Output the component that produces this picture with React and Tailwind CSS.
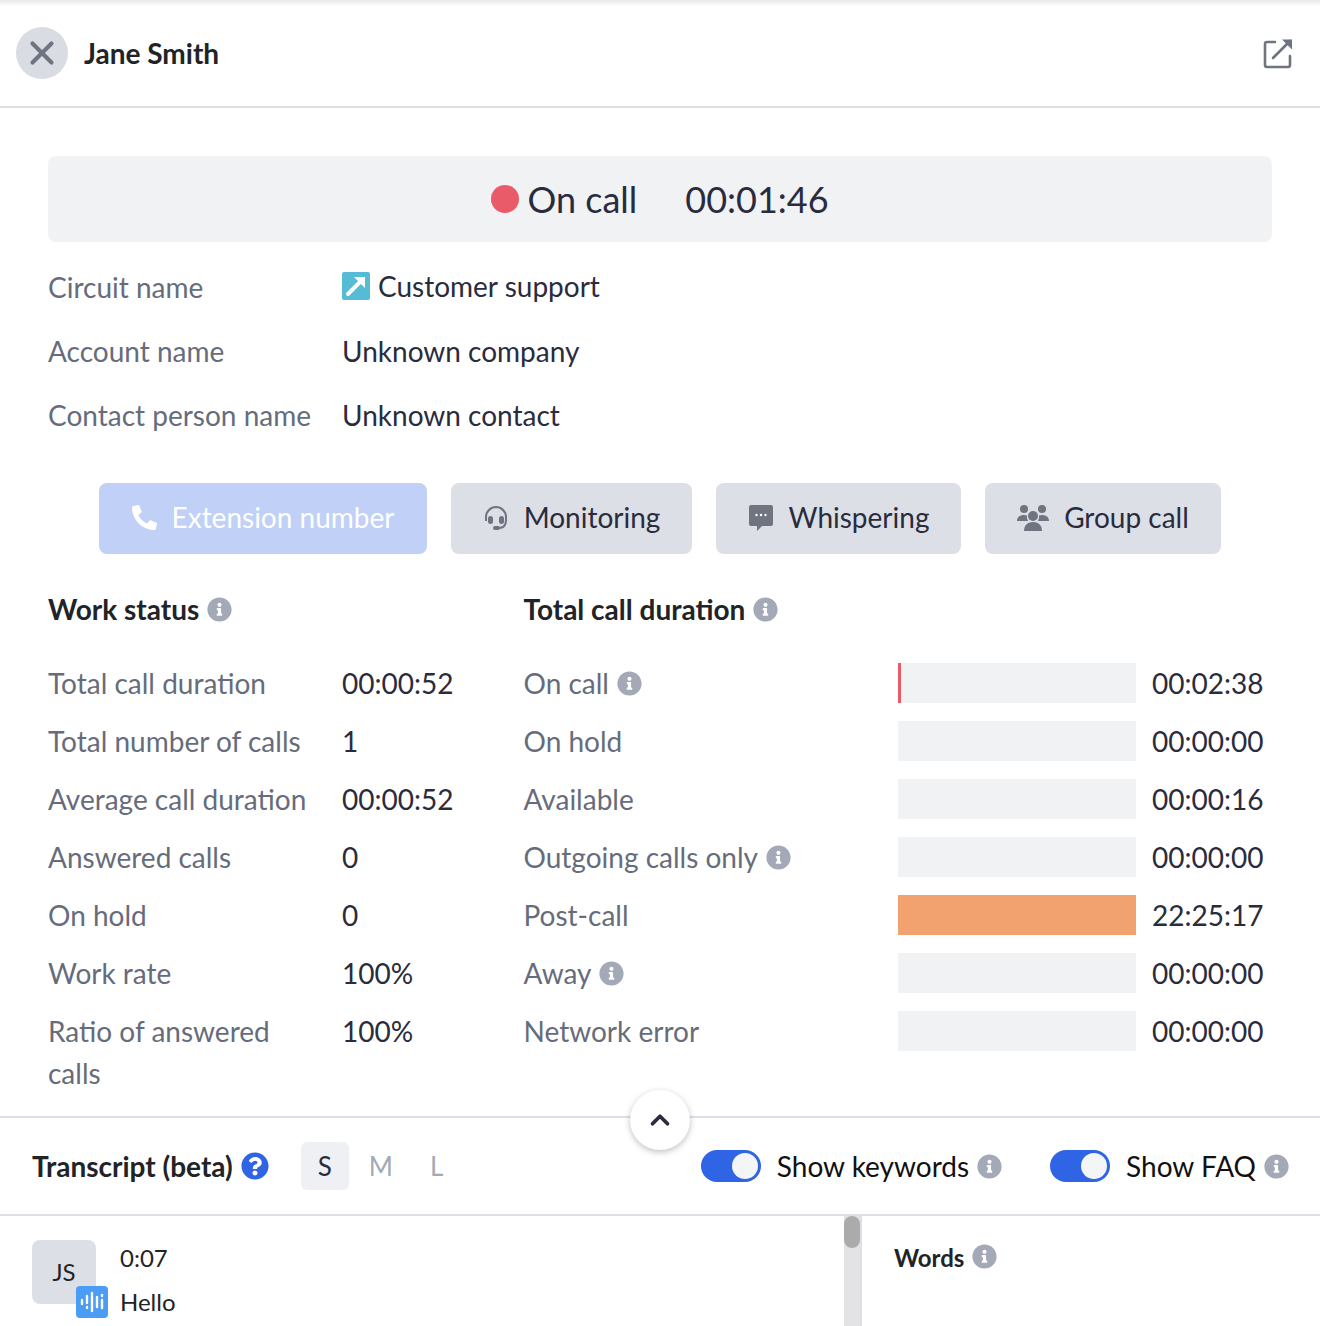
import { X, ChevronUp } from "lucide-react";
import { FaPhoneAlt, FaInfoCircle, FaQuestionCircle } from "react-icons/fa";

const workStatus = [
  ["Total call duration", "00:00:52"],
  ["Total number of calls", "1"],
  ["Average call duration", "00:00:52"],
  ["Answered calls", "0"],
  ["On hold", "0"],
  ["Work rate", "100%"],
  ["Ratio of answered calls", "100%"],
];

const durations = [
  { label: "On call", info: true, value: "00:02:38", bar: "red" },
  { label: "On hold", value: "00:00:00" },
  { label: "Available", value: "00:00:16" },
  { label: "Outgoing calls only", info: true, value: "00:00:00" },
  { label: "Post-call", value: "22:25:17", bar: "orange" },
  { label: "Away", info: true, value: "00:00:00" },
  { label: "Network error", value: "00:00:00" },
];

const Info = ({ className = "" }) => (
  <FaInfoCircle className={"text-[#a3a9b6] text-[25px] shrink-0 " + className} />
);

const Toggle = () => (
  <div className="w-[60px] h-8 rounded-full bg-[#2f64e4] flex items-center justify-end pr-[3px] shrink-0">
    <div className="w-[26px] h-[26px] rounded-full bg-[#f4f5f7]" />
  </div>
);

function ActionButton({ icon, label, className }) {
  return (
    <button className={"h-[71px] pb-0.5 rounded-lg flex items-center justify-center gap-4 bg-[#dcdfe6] text-[#2a2c3d] " + className}>
      {icon}
      <span className="pb-0.5 -ml-px">{label}</span>
    </button>
  );
}

export default function App() {
  return (
    <div className="relative w-[1320px] h-[1326px] overflow-hidden bg-white text-[28px] text-[#2a2c3d] font-['Lato','Liberation_Sans',sans-serif]">
      {/* HEADER */}
      <div className="h-[108px] border-b-2 border-[#dcdfe6] flex items-center pl-4 pr-[26px] bg-gradient-to-b from-[#e8e9ec] to-white to-[6%]">
        <div className="w-[52px] h-[52px] rounded-full bg-[#d9dce3] flex items-center justify-center">
          <X size={38} strokeWidth={2.6} className="text-[#6f7480]" />
        </div>
        <div className="ml-4 text-[28px] font-bold text-[#222326]">Jane Smith</div>
        <svg className="ml-auto" width="32" height="32" viewBox="0 0 32 32" fill="none" stroke="#6f7480" strokeWidth="2.6" strokeLinecap="round">
          <path d="M13 5H5a2 2 0 0 0-2 2v21a2 2 0 0 0 2 2h21a2 2 0 0 0 2-2v-9" />
          <path d="M11 21 28 4" />
          <path d="M20 2.5h10v10z" fill="#6f7480" stroke="none" />
        </svg>
      </div>

      <div className="px-12 pt-12">
        {/* STATUS */}
        <div className="h-[86px] rounded-lg bg-[#f1f2f4] flex items-center justify-center text-[36px]">
          <div className="w-7 h-7 rounded-full bg-[#e95b68] mr-2" />
          <span>On call</span>
          <span className="ml-12">00:01:46</span>
        </div>

        {/* BASIC INFO */}
        <div className="mt-[13px] grid grid-cols-[294px_1fr] auto-rows-[64px] items-center">
          <div className="text-[#666c7b]">Circuit name</div>
          <div className="flex items-center gap-2 -mt-0.5">
            <svg width="28" height="28" viewBox="0 0 28 28">
              <rect width="28" height="28" rx="2" fill="#56bbd5" />
              <path d="M6 22 21 7" stroke="#fff" strokeWidth="4" strokeLinecap="round" />
              <path d="M12 5h11v11z" fill="#fff" />
            </svg>
            Customer support
          </div>
          <div className="text-[#666c7b]">Account name</div>
          <div>Unknown company</div>
          <div className="text-[#666c7b]">Contact person name</div>
          <div>Unknown contact</div>
        </div>

        {/* ACTION BUTTONS */}
        <div className="mt-9 flex justify-center gap-6">
          <ActionButton
            className="w-[328px] !bg-[#c0d0f6] !text-white"
            icon={<FaPhoneAlt className="text-[25px]" />}
            label="Extension number"
          />
          <ActionButton
            className="w-[241px]"
            icon={
              <svg width="26" height="26" viewBox="0 0 26 26" fill="none" stroke="#6f7480" strokeWidth="2">
                <path d="M3 16v-4a10 10 0 0 1 20 0v4" />
                <path d="M23 15c0 5-2 8-7 8" />
                <rect x="5" y="11" width="5" height="8" rx="2.5" fill="#6f7480" stroke="none" />
                <rect x="16" y="11" width="5" height="8" rx="2.5" fill="#6f7480" stroke="none" />
                <rect x="10" y="21" width="7" height="4" rx="2" fill="#6f7480" stroke="none" />
              </svg>
            }
            label="Monitoring"
          />
          <ActionButton
            className="w-[245px]"
            icon={
              <svg width="26" height="30" viewBox="0 0 26 30">
                <path d="M3 2h20a2 2 0 0 1 2 2v17a2 2 0 0 1-2 2H14l-5 5v-5H3a2 2 0 0 1-2-2V4a2 2 0 0 1 2-2z" fill="#6f7480" />
                <circle cx="8.5" cy="12" r="1.2" fill="#fff" />
                <circle cx="13" cy="12" r="1.2" fill="#fff" />
                <circle cx="17.5" cy="12" r="1.2" fill="#fff" />
              </svg>
            }
            label="Whispering"
          />
          <ActionButton
            className="w-[236px]"
            icon={
              <svg width="32" height="28" viewBox="0 0 32 28" fill="#6f7480">
                <circle cx="7" cy="5" r="4" />
                <circle cx="25" cy="5" r="4" />
                <circle cx="16" cy="12" r="5" />
                <path d="M0 17c0-4 3-6 7-6 1 0 2 .2 3 .6A7 7 0 0 0 11 17z" />
                <path d="M32 17c0-4-3-6-7-6-1 0-2 .2-3 .6A7 7 0 0 1 21 17z" />
                <path d="M7 27c0-6 4-9 9-9s9 3 9 9z" />
              </svg>
            }
            label="Group call"
          />
        </div>

        {/* STATS */}
        <div className="mt-[37px] flex">
          <div className="w-[475.5px] shrink-0">
            <div className="h-9 flex items-center gap-2 font-bold text-[#222326]">
              Work status <Info />
            </div>
            <div className="mt-[35px] grid grid-cols-[294px_1fr]">
              {workStatus.map(([label, value]) => (
                <div key={label} className="contents">
                  <div className="text-[#666c7b] leading-[42px] pb-4 pr-6">{label}</div>
                  <div className="leading-[42px]">{value}</div>
                </div>
              ))}
            </div>
          </div>

          <div className="flex-1">
            <div className="h-9 flex items-center gap-2 font-bold text-[#222326]">
              Total call duration <Info />
            </div>
            <div className="mt-[35px]">
              {durations.map((d) => (
                <div key={d.label} className="h-[58px] flex items-start">
                  <div className="w-[374.5px] shrink-0 h-[42px] flex items-center gap-2 text-[#666c7b]">
                    {d.label}
                    {d.info && <Info />}
                  </div>
                  <div
                    className={
                      "w-[238px] h-10 mt-px " +
                      (d.bar === "orange" ? "bg-[#f2a26f]" : "bg-[#f1f2f4]") +
                      (d.bar === "red" ? " border-l-[3px] border-[#e95b68]" : "")
                    }
                  />
                  <div className="ml-4 leading-[42px]">{d.value}</div>
                </div>
              ))}
            </div>
          </div>
        </div>
      </div>

      {/* TRANSCRIPT BAR */}
      <div className="absolute left-0 right-0 top-[1116px] h-[100px] border-y-2 border-[#dcdfe6] flex items-center pl-8 pr-[31px]">
        <div className="font-bold text-[#222326]">Transcript (beta)</div>
        <FaQuestionCircle className="ml-2 text-[28px] text-[#2f64e4]" />
        <div className="ml-[32px] w-12 h-12 rounded-md bg-[#eef0f3] flex items-center justify-center text-[26px]">S</div>
        <div className="ml-1 w-14 text-center text-[26px] text-[#a3a9b6]">M</div>
        <div className="w-14 text-center text-[26px] text-[#a3a9b6]">L</div>
        <div className="ml-auto flex items-center gap-4 text-[#111]">
          <Toggle />
          <span>Show keywords</span>
          <Info className="-ml-2" />
        </div>
        <div className="ml-12 flex items-center gap-4 text-[#111]">
          <Toggle />
          <span>Show FAQ</span>
          <Info className="-ml-2" />
        </div>
      </div>

      <button className="absolute left-[630px] top-[1090px] w-[60px] h-[60px] rounded-full bg-white shadow-[0_2px_6px_rgba(0,0,0,0.25)] flex items-center justify-center">
        <ChevronUp size={30} strokeWidth={3} className="text-[#2a2c3d]" />
      </button>

      {/* TRANSCRIPT BODY */}
      <div className="absolute left-0 right-0 top-[1216px] bottom-0 flex">
        <div className="w-[844px] pl-8 pt-6 flex gap-6 text-[24px] text-[#222326]">
          <div className="relative w-16 h-16 rounded-lg bg-[#dcdfe6] flex items-center justify-center text-[24px]">
            JS
            <div className="absolute left-11 top-[46px] w-8 h-8 rounded bg-[#4a9cf5] flex items-center justify-center">
              <svg width="26" height="22" viewBox="0 0 26 22" stroke="#fff" strokeWidth="2.4" strokeLinecap="round">
                <path d="M3 9v4M8 5v7M8 16v1M13 2v18M18 6v10M23 4v1M23 9v8" />
              </svg>
            </div>
          </div>
          <div className="leading-[44px] -mt-1">
            <div>0:07</div>
            <div>Hello</div>
          </div>
        </div>
        <div className="w-[18px] bg-[#e3e3e5] border-r-2 border-[#dcdfe6]">
          <div className="w-4 h-8 rounded-full bg-[#ababab]" />
        </div>
        <div className="pl-8 pt-6 flex items-start gap-2 text-[24px] font-bold text-[#222326]">
          Words <Info className="mt-[4px]" />
        </div>
      </div>
    </div>
  );
}
